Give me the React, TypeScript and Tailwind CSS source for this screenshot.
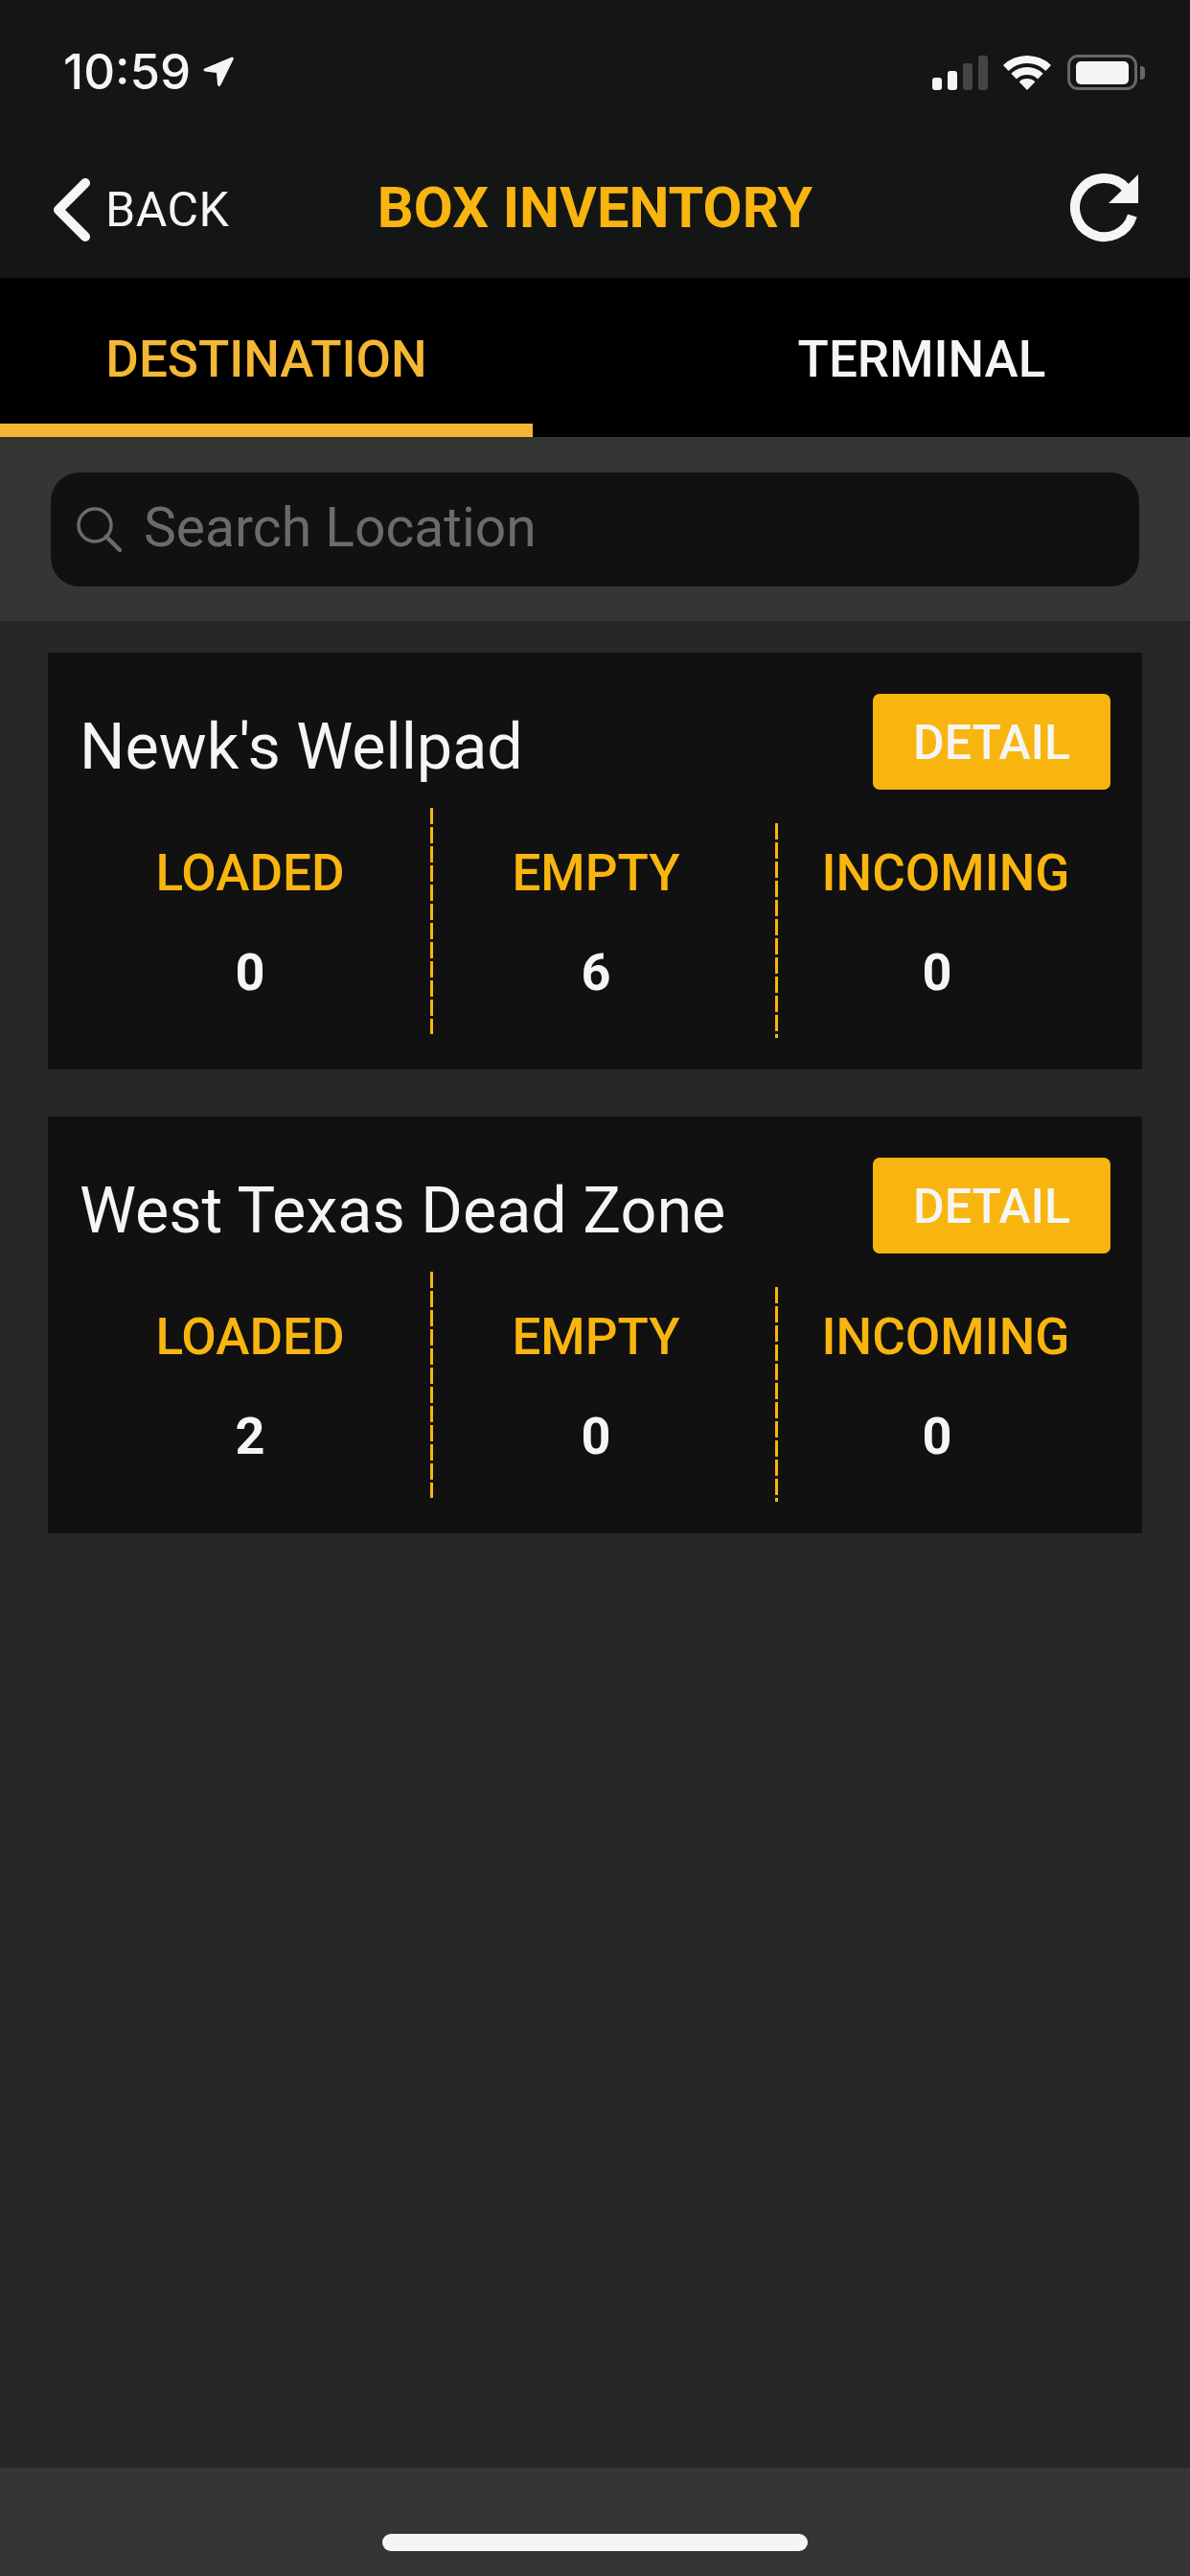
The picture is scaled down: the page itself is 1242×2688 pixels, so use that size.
const stats = (a: number, b: number, c: number) => [
  { label: "LOADED", value: a },
  { label: "EMPTY", value: b },
  { label: "INCOMING", value: c },
];

function Dash({ className }: { className: string }) {
  return <div className={"absolute left-0 w-[3px] bg-[repeating-linear-gradient(to_bottom,#f9b50f_0,#f9b50f_17px,transparent_17px,transparent_20px)] " + className} />;
}

function Card({ name, a, b, c }: { name: string; a: number; b: number; c: number }) {
  const items = stats(a, b, c);
  return (
    <div className="h-[435px] bg-[#111111] pt-[43px]">
      <div className="flex h-[100px] items-center justify-between pl-[33px] pr-[33px]">
        <div className="pt-[10px] text-[66.5px] leading-none text-[#f5f5f5]">{name}</div>
        <div className="flex h-[100px] w-[248px] items-center justify-center rounded-[7px] bg-[#f9b50f] pt-[2px] text-[50px] font-medium text-[#f5f5f5]">DETAIL</div>
      </div>
      <div className="grid grid-cols-[399px_360px_338px]">
        {items.map((s, i) => (
          <div key={s.label} className={"relative flex h-[240px] flex-col items-center pt-[55px] " + (i === 0 ? "pl-[23px]" : i === 1 ? "pr-[14px]" : "")}>
            {i === 1 && <Dash className="top-[19px] h-[236px]" />}
            {i === 2 && <Dash className="top-[35px] h-[224px]" />}
            <div className={"text-[53px] font-medium leading-[64px] text-[#f9b50f] " + (i === 2 ? "ml-[18px]" : "")}>{s.label}</div>
            <div className="mt-[40px] text-[54px] font-bold leading-[64px] text-[#f5f5f5]">{s.value}</div>
          </div>
        ))}
      </div>
    </div>
  );
}

export default function App() {
  return (
    <div className="flex h-[2688px] w-[1242px] flex-col overflow-hidden bg-[#262827] font-['Roboto',sans-serif]">
      <header className="h-[290px] shrink-0 bg-[#141616]">
        <div className="flex h-[150px] items-start justify-between pl-[66px] pr-[47px] pt-[49px]">
          <div className="flex items-center gap-[13px] font-['Inter',sans-serif] text-[51px] font-medium leading-[52px] text-[#f5f5f5]">
            <span>10:59</span>
            <svg viewBox="0 0 32 32" className="h-[32px] w-[32px]">
              <path d="M29.5 0.8 L1.5 12.5 Q-1 14.5 2 15.5 L14 17 L15 29.5 Q16.5 33 18.5 29.5 L31.5 3 Q32.5 0 29.5 0.8 Z" fill="#f5f5f5" />
            </svg>
          </div>
          <div className="flex items-end gap-[16px] pt-[8px]">
            <div className="flex h-[36px] items-end gap-[6px]">
              <div className="h-[13px] w-[10px] rounded-[3px] bg-[#f5f5f5]" />
              <div className="h-[20px] w-[10px] rounded-[3px] bg-[#f5f5f5]" />
              <div className="h-[28px] w-[10px] rounded-[3px] bg-[#444544]" />
              <div className="h-[36px] w-[10px] rounded-[3px] bg-[#444544]" />
            </div>
            <svg viewBox="0 0 50 36" className="h-[36px] w-[50px]">
              <path d="M0 10.1 A36 36 0 0 1 50 10.1 L44.45 15.9 A28 28 0 0 0 5.55 15.9 Z" fill="#f5f5f5" />
              <path d="M8.33 18.74 A24 24 0 0 1 41.67 18.74 L36.1 24.5 A16 16 0 0 0 13.9 24.5 Z" fill="#f5f5f5" />
              <path d="M16.7 27.4 A12 12 0 0 1 33.3 27.4 L25 36 Z" fill="#f5f5f5" />
            </svg>
            <div className="ml-[1px] flex items-center gap-[3px]">
              <div className="flex h-[37px] w-[73px] items-center justify-center rounded-[11px] border-[3px] border-[#666766]">
                <div className="h-[24px] w-[55px] rounded-[5px] bg-[#f5f5f5]" />
              </div>
              <div className="h-[14px] w-[5px] rounded-r-[4px] bg-[#666766]" />
            </div>
          </div>
        </div>
        <div className="grid h-[140px] grid-cols-[1fr_auto_1fr] items-start">
          <div className="flex items-center pl-[55px] pt-[35px]">
            <svg viewBox="0 0 40 68" className="h-[68px] w-[40px]">
              <path d="M34 6 L6 34 L34 62" fill="none" stroke="#f5f5f5" strokeWidth="10" strokeLinecap="round" strokeLinejoin="round" />
            </svg>
            <span className="ml-[15px] text-[50px] font-normal leading-none tracking-[0.5px] text-[#f5f5f5]">BACK</span>
          </div>
          <div className="pt-[32px] text-[59.5px] font-bold leading-[70px] text-[#f9b50f]">BOX INVENTORY</div>
          <div className="flex justify-end pr-[53px] pt-[31px]">
            <svg viewBox="0 0 72 72" className="h-[72px] w-[72px]">
              <path d="M64.8 44 A30.5 30.5 0 1 1 58 15" fill="none" stroke="#f5f5f5" strokeWidth="10" />
              <path d="M71 1 V31 H40 Z" fill="#f5f5f5" />
            </svg>
          </div>
        </div>
      </header>

      <nav className="flex h-[166px] shrink-0 bg-black">
        <div className="flex h-full w-[556px] items-center justify-center border-b-[14px] border-[#f3b735] pt-[20px] text-[53px] font-medium text-[#f3b735]">DESTINATION</div>
        <div className="flex h-full flex-1 items-center justify-center pl-[126px] pt-[6px] text-[53px] font-medium text-[#f5f5f5]">TERMINAL</div>
      </nav>

      <div className="flex h-[192px] shrink-0 items-center bg-[#343634] px-[53px]">
        <div className="flex h-[119px] flex-1 items-center rounded-[30px] bg-[#111111] pl-[26px]">
          <svg viewBox="0 0 48 48" className="h-[48px] w-[48px]">
            <circle cx="20" cy="20" r="17" fill="none" stroke="#6b6b6b" strokeWidth="3.5" />
            <path d="M32 32 L46 46" stroke="#6b6b6b" strokeWidth="4.5" strokeLinecap="round" />
          </svg>
          <span className="ml-[23px] pb-[3px] text-[57px] text-[#6b6b6b]">Search Location</span>
        </div>
      </div>

      <main className="flex flex-1 flex-col gap-[49px] px-[50px] pt-[33px]">
        <Card name="Newk's Wellpad" a={0} b={6} c={0} />
        <Card name="West Texas Dead Zone" a={2} b={0} c={0} />
      </main>

      <footer className="flex h-[113px] shrink-0 items-start justify-center bg-[#343634] pt-[69px]">
        <div className="h-[18px] w-[444px] rounded-full bg-[#f5f5f5]" />
      </footer>
    </div>
  );
}
